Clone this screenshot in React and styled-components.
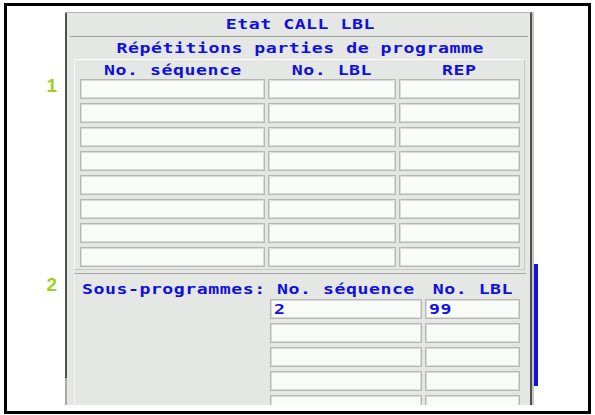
import React from "react";
import styled, { createGlobalStyle } from "styled-components";

const GlobalStyle = createGlobalStyle`
  html, body {
    margin: 0;
    padding: 0;
    background: #ffffff;
  }
`;

const BLUE = "#1010de";
const PANEL = "#e5e7e5";

const Frame = styled.div`
  box-sizing: border-box;
  width: 587px;
  height: 411px;
  margin: 3px 0 0 4px;
  border: 3px solid #000;
  background: #fff;
  display: flex;
  overflow: hidden;
`;

const Gutter = styled.div`
  width: 58px;
  flex: 0 0 58px;
  display: flex;
  flex-direction: column;
  align-items: flex-end;
  padding-right: 8px;
  box-sizing: border-box;
`;

const Marker = styled.div`
  margin-top: ${(p) => p.offset}px;
  height: 20px;
  line-height: 20px;
  font-family: "Liberation Sans", Arial, sans-serif;
  font-weight: bold;
  font-size: 19px;
  color: #9fcf1f;
`;

const Panel = styled.div`
  width: 473px;
  height: 393px;
  margin-top: 6px;
  display: flex;
  overflow: hidden;
`;

const Window = styled.div`
  flex: 1;
  display: flex;
  flex-direction: column;
  min-width: 0;
  overflow: hidden;
  box-sizing: border-box;
  padding-left: 2px;
  border-top: 1px solid #b4b6b4;
  border-right: 2px solid #4e504e;
  background:
    linear-gradient(#4e504e, #4e504e) left top / 2px 365px no-repeat,
    linear-gradient(#a9aba9, #a9aba9) left bottom / 2px 28px no-repeat,
    ${PANEL};
  font-family: "DejaVu Sans Mono", "Liberation Mono", monospace;
  font-weight: bold;
  font-size: 14px;
  color: ${BLUE};
`;

/* the control font is a wide monospace; stretch DejaVu to the same pitch */
const Wide = styled.span`
  display: inline-block;
  letter-spacing: 0.4px;
  transform: scaleX(1.3);
  transform-origin: ${(p) => (p.left ? "left center" : "center center")};
  white-space: nowrap;
`;

const Title = styled.div`
  height: ${(p) => p.h}px;
  line-height: ${(p) => p.h}px;
  text-align: center;
  padding-left: 3px;
`;

const Divider = styled.div`
  height: 1px;
  background: #9c9e9c;
  margin: 0 2px 0 3px;
`;

const RepeatBox = styled.div`
  margin: 0 5px 3px 7px;
  padding: 0 4px 2px 5px;
  border: 1px solid;
  border-color: #fafcfa #c8cac8 #c8cac8 #fafcfa;
`;

const RepeatGrid = styled.div`
  display: grid;
  grid-template-columns: 185px 128px 121px;
  grid-auto-rows: 20px;
  column-gap: 3px;
  row-gap: 4px;
`;

const HeaderRow = styled.div`
  display: grid;
  grid-template-columns: ${(p) => p.cols};
  column-gap: 3px;
  height: ${(p) => p.h}px;
`;

const Head = styled.div`
  text-align: ${(p) => (p.left ? "left" : "center")};
  padding-left: ${(p) => (p.left ? "7px" : "0")};
  padding-top: ${(p) => p.top || 0}px;
  line-height: ${(p) => p.lh}px;
`;

const Cell = styled.div`
  box-sizing: border-box;
  height: 20px;
  background: #f9fbf9;
  border: 1px solid #b6b8b6;
  box-shadow: inset 0 0 0 1px #dadcda;
  padding-left: 3px;
  line-height: 18px;
`;

const SubBox = styled.div`
  flex: 1;
  min-height: 0;
  overflow: hidden;
  margin: 0 4px 0 7px;
  padding-right: 6px;
  border-top: 1px solid #a6a8a6;
  border-left: 1px solid #f4f6f4;
`;

const SubGrid = styled.div`
  display: grid;
  grid-template-columns: 1fr 152px 95px;
  grid-auto-rows: 20px;
  column-gap: 3px;
  row-gap: 4px;
`;

const Spacer = styled.div``;

const Track = styled.div`
  width: 6px;
  flex: 0 0 6px;
  box-sizing: border-box;
  border-left: 2px solid #c4c6c4;
  padding-top: 252px;
`;

const Thumb = styled.div`
  width: 4px;
  height: 122px;
  background: #1414d8;
`;

const repeatRows = Array.from({ length: 8 });
const subRows = [
  ["2", "99"],
  ["", ""],
  ["", ""],
  ["", ""],
  ["", ""],
];

export default function App() {
  return (
    <>
      <GlobalStyle />
      <Frame>
        <Gutter>
          <Marker offset={70}>1</Marker>
          <Marker offset={179}>2</Marker>
        </Gutter>
        <Panel>
          <Window>
            <Title h={23}>
              <Wide>Etat CALL LBL</Wide>
            </Title>
            <Divider />
            <Title h={22}>
              <Wide>Répétitions parties de programme</Wide>
            </Title>
            <RepeatBox>
              <HeaderRow cols="185px 128px 121px" h={19}>
                <Head lh={20}>
                  <Wide>No. séquence</Wide>
                </Head>
                <Head lh={20}>
                  <Wide>No. LBL</Wide>
                </Head>
                <Head lh={20}>
                  <Wide>REP</Wide>
                </Head>
              </HeaderRow>
              <RepeatGrid>
                {repeatRows.map((_, i) => (
                  <React.Fragment key={i}>
                    <Cell />
                    <Cell />
                    <Cell />
                  </React.Fragment>
                ))}
              </RepeatGrid>
            </RepeatBox>
            <SubBox>
              <HeaderRow cols="1fr 152px 95px" h={25}>
                <Head left top={8} lh={14}>
                  <Wide left>Sous-programmes:</Wide>
                </Head>
                <Head top={8} lh={14}>
                  <Wide>No. séquence</Wide>
                </Head>
                <Head top={8} lh={14}>
                  <Wide>No. LBL</Wide>
                </Head>
              </HeaderRow>
              <SubGrid>
                {subRows.map(([seq, lbl], i) => (
                  <React.Fragment key={i}>
                    <Spacer />
                    <Cell>{seq && <Wide left>{seq}</Wide>}</Cell>
                    <Cell>{lbl && <Wide left>{lbl}</Wide>}</Cell>
                  </React.Fragment>
                ))}
              </SubGrid>
            </SubBox>
          </Window>
          <Track>
            <Thumb />
          </Track>
        </Panel>
      </Frame>
    </>
  );
}
